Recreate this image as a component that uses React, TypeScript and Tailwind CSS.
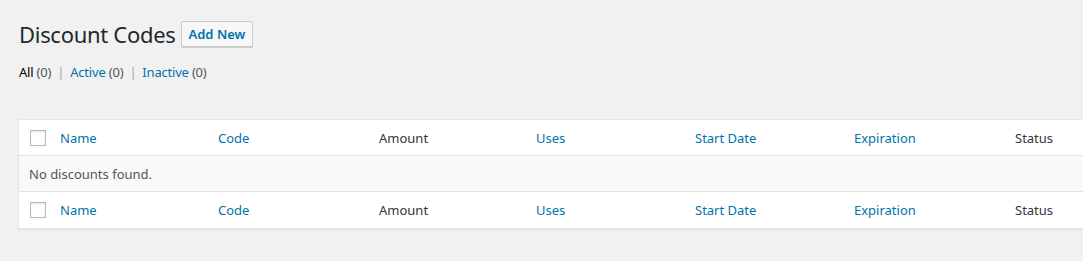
const columns: { label: string; sortable: boolean; width: string }[] = [
  { label: "Name", sortable: true, width: "w-[158px]" },
  { label: "Code", sortable: true, width: "w-[161px]" },
  { label: "Amount", sortable: false, width: "w-[157px]" },
  { label: "Uses", sortable: true, width: "w-[159px]" },
  { label: "Start Date", sortable: true, width: "w-[159px]" },
  { label: "Expiration", sortable: true, width: "w-[161px]" },
  { label: "Status", sortable: false, width: "w-[160px]" },
];

function HeaderRow({ bordered }: { bordered: boolean }) {
  return (
    <div className={`flex h-[36px] items-center ${bordered ? "border-b border-[#e1e1e1]" : ""}`}>
      <div className="flex w-[33px] shrink-0 items-center">
        <span className="ml-[11px] block size-4 border border-[#b4b9be] bg-white shadow-[inset_0_1px_2px_rgba(0,0,0,0.1)]" />
      </div>
      {columns.map((col) => (
        <div key={col.label} className={`${col.width} shrink-0 pl-[8px] pt-[2px]`}>
          <span className={col.sortable ? "text-[#0073aa]" : "text-[#32373c]"}>{col.label}</span>
        </div>
      ))}
    </div>
  );
}

export default function App() {
  return (
    <div
      className="min-h-screen w-full overflow-hidden bg-[#f1f1f1] text-[13px] text-[#444]"
      style={{ fontFamily: '"Noto Sans", "Open Sans", sans-serif' }}
    >
      <div className="pl-[18px] pt-[19px]">
        <div className="flex h-[30px] items-center">
          <h1 className="ml-[1px] text-[22px] leading-[30px] font-normal tracking-[-0.3px] text-[#23282d]">
            Discount Codes
          </h1>
          <button className="ml-[5px] h-[26px] rounded-[2px] border border-[#ccc] bg-[#f7f7f7] px-[7px] text-[13px] font-semibold leading-[24px] text-[#0073aa] shadow-[0_1px_0_#ccc]">
            Add New
          </button>
        </div>

        <ul className="mt-[14px] flex h-[20px] items-center text-[13px] tracking-[-0.2px] text-[#666]">
          <li className="ml-[1px]">
            <span className="text-black">All</span> <span className="text-[#555]">(0)</span>
            <span className="mx-[6px] text-[#a0a5aa]">|</span>
          </li>
          <li>
            <span className="text-[#0073aa]">Active</span> <span className="text-[#555]">(0)</span>
            <span className="mx-[6px] text-[#a0a5aa]">|</span>
          </li>
          <li>
            <span className="text-[#0073aa]">Inactive</span> <span className="text-[#555]">(0)</span>
          </li>
        </ul>

        <div className="mt-[36px] w-[1250px] border border-[#e5e5e5] bg-white shadow-[0_1px_1px_rgba(0,0,0,0.04)]">
          <HeaderRow bordered />
          <div className="flex h-[36px] items-center border-b border-[#e1e1e1] bg-[#f9f9f9] pl-[10px] pt-[2px] text-[#555]">
            No discounts found.
          </div>
          <HeaderRow bordered={false} />
        </div>
      </div>
    </div>
  );
}
